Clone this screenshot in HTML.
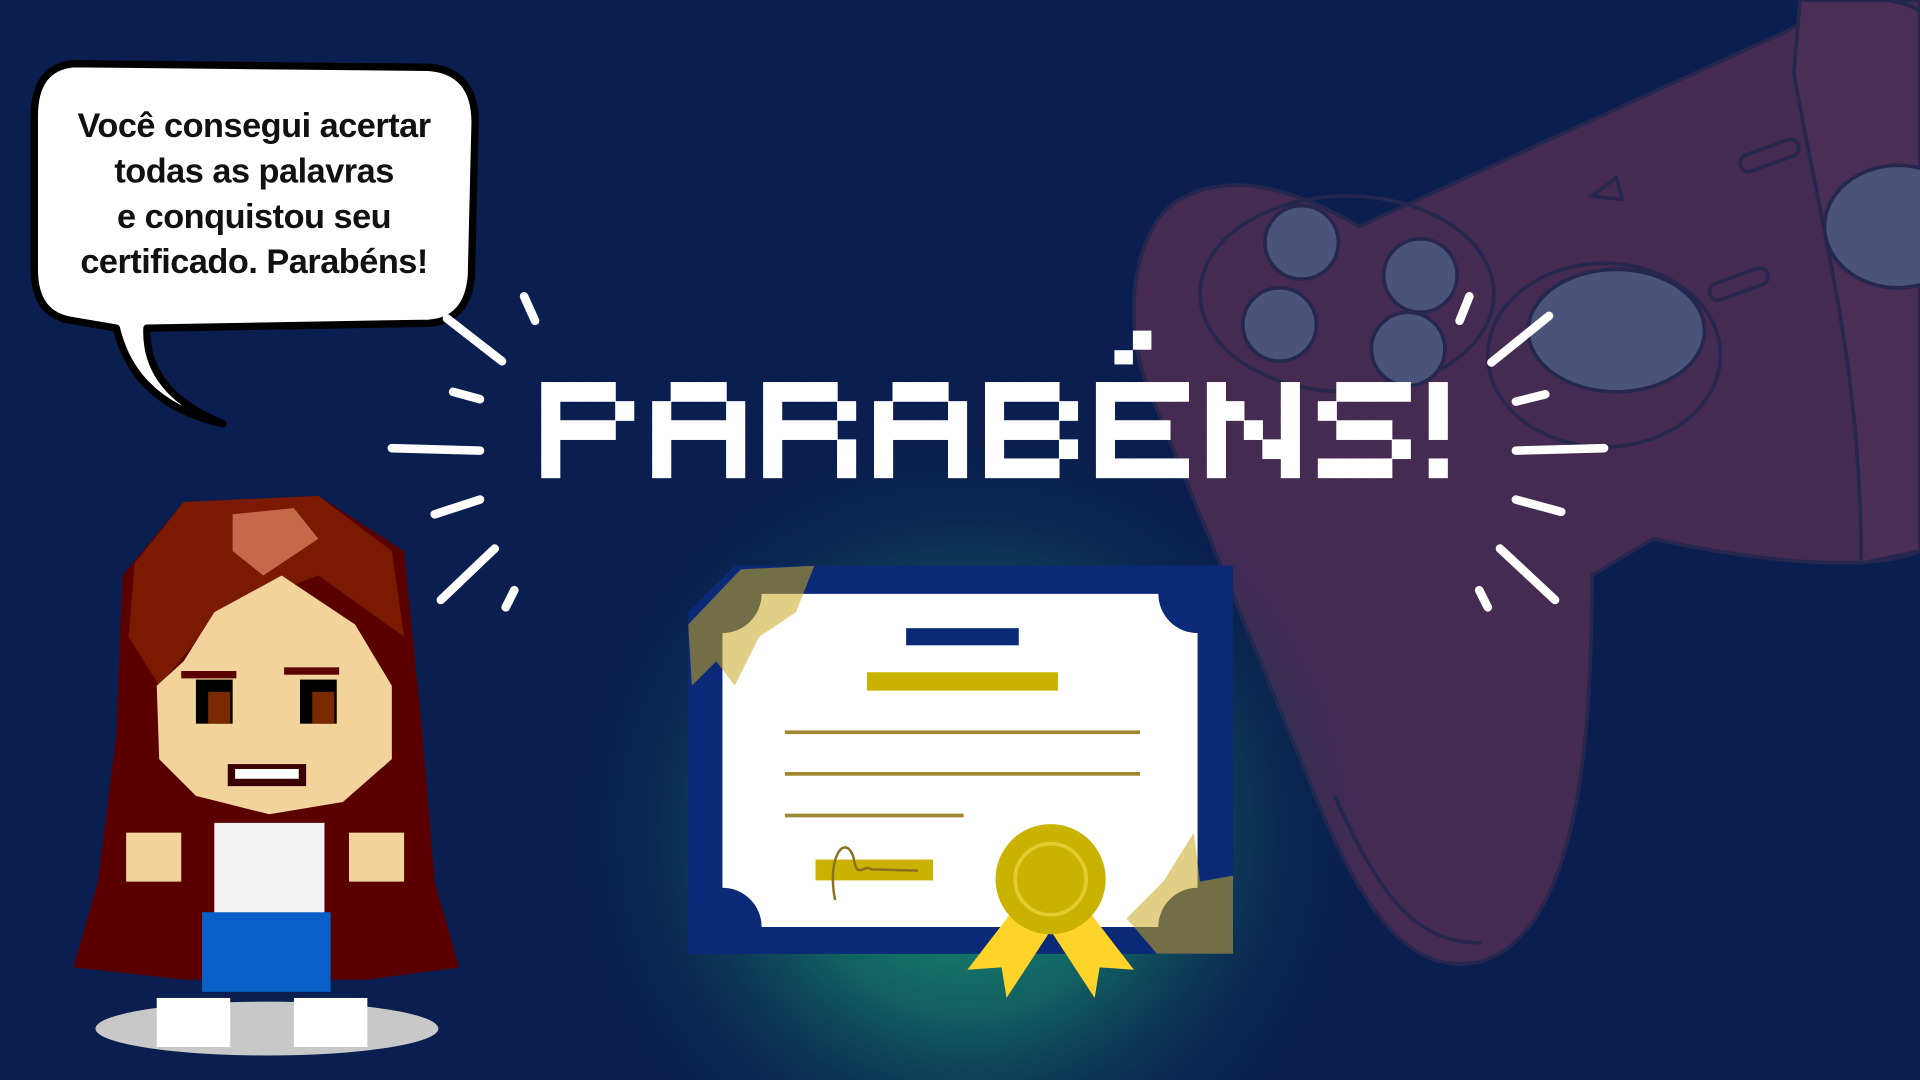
<!DOCTYPE html>
<html><head><meta charset="utf-8"><style>
html,body{margin:0;padding:0;width:1920px;height:1080px;overflow:hidden;background:#0a1f4f}
#w{position:absolute;left:0;top:0;width:1568px;height:882px;transform:scale(1.22449);transform-origin:0 0}
.t{position:absolute;left:25px;top:84px;width:365px;text-align:center;font-family:"Liberation Sans",sans-serif;font-weight:bold;font-size:28px;line-height:37px;color:#111;letter-spacing:-0.4px}
</style></head><body><div id="w">
<svg width="1568" height="882" viewBox="0 0 1568 882" style="position:absolute;left:0;top:0">
<defs>
<radialGradient id="g" cx="790" cy="680" r="330" gradientUnits="userSpaceOnUse">
<stop offset="0" stop-color="#1fa07e"/><stop offset="0.45" stop-color="#137066" stop-opacity="0.8"/><stop offset="1" stop-color="#0a1f4f" stop-opacity="0"/></radialGradient>
<clipPath id="cc"><path d="M562 500 L600 462 L1007 462 L1007 779 L562 779 Z"/></clipPath>
</defs>
<rect width="1568" height="882" fill="#0a1f4f"/>
<!-- controller -->
<g stroke="#26274f" stroke-width="3">
<path d="M960 165 C1000 140 1050 150 1110 185 L1460 25 C1500 0 1568 0 1568 0 L1568 450 C1520 470 1420 455 1350 440 L1300 470 C1300 600 1290 760 1210 785 C1150 800 1110 740 1070 640 C1020 520 980 420 935 310 C915 250 930 185 960 165 Z" fill="#452b52"/>
<path d="M1470 0 L1540 0 C1568 5 1568 10 1568 10 L1568 450 L1520 460 C1520 300 1490 200 1465 60 Z" fill="#4a2e56"/>
<ellipse cx="1100" cy="240" rx="120" ry="80" fill="none"/>
<circle cx="1063" cy="198" r="30" fill="#4a5478"/>
<circle cx="1160" cy="225" r="30" fill="#4a5478"/>
<circle cx="1045" cy="265" r="30" fill="#4a5478"/>
<circle cx="1150" cy="285" r="30" fill="#4a5478"/>
<ellipse cx="1310" cy="290" rx="95" ry="75" fill="none"/>
<ellipse cx="1320" cy="270" rx="72" ry="50" fill="#4a5478"/>
<ellipse cx="1550" cy="185" rx="60" ry="50" fill="#4a5478"/>
<path d="M1300 160 l20 -15 l5 18 z" fill="none"/>
<rect x="1420" y="120" width="50" height="14" rx="7" fill="none" transform="rotate(-20 1445 127)"/>
<rect x="1395" y="225" width="50" height="14" rx="7" fill="none" transform="rotate(-20 1420 232)"/>
<path d="M1090 650 C1130 740 1160 770 1210 770" fill="none"/>
</g>
<rect width="1568" height="882" fill="url(#g)"/>
<!-- speech bubble -->
<path d="M60 52 L350 55 Q388 58 388 100 L385 225 Q382 262 350 264 L120 268 Q118 320 182 346 Q110 330 95 268 L60 262 Q28 258 28 220 L28 95 Q28 55 60 52 Z" fill="#fff" stroke="#000" stroke-width="6" stroke-linejoin="round"/>
<!-- rays -->
<g stroke="#fff" stroke-width="7" stroke-linecap="round" fill="none">
<path d="M365 260 L410 295"/><path d="M428 242 L437 262"/><path d="M370 320 L392 326"/><path d="M320 366 L392 368"/>
<path d="M355 420 L392 408"/><path d="M360 490 L404 448"/><path d="M413 496 L420 482"/>
<path d="M1265 258 L1218 296"/><path d="M1200 242 L1192 262"/><path d="M1262 322 L1238 328"/><path d="M1310 366 L1238 368"/>
<path d="M1275 418 L1238 408"/><path d="M1270 490 L1225 448"/><path d="M1215 496 L1208 482"/>
</g>
<g fill="#fff" id="title"></g>
<!-- certificate -->
<path d="M562 500 L600 462 L1007 462 L1007 779 L562 779 Z" fill="#0a2a78"/>
<g clip-path="url(#cc)">
<path d="M590 485 L978 485 L978 757 L590 757 Z" fill="#fff"/>
<circle cx="978" cy="485" r="32" fill="#0a2a78"/><circle cx="590" cy="485" r="32" fill="#0a2a78"/>
<circle cx="978" cy="757" r="32" fill="#0a2a78"/><circle cx="590" cy="757" r="32" fill="#0a2a78"/>
<g fill="#c9a820" opacity="0.55"><path d="M605 465 L665 462 L650 500 L620 520 L600 560 L585 540 L565 560 L562 510 Z"/><path d="M975 680 L980 720 L1007 715 L1007 779 L945 779 L920 750 L950 720 Z"/></g>
</g>
<rect x="740" y="513" width="92" height="14" fill="#0a2a78"/>
<rect x="708" y="549" width="156" height="15" fill="#c9b300"/>
<g stroke="#a08830" stroke-width="3"><path d="M641 598H931M641 632H931M641 666H787"/></g>
<rect x="666" y="702" width="96" height="17" fill="#c9b300"/>
<path d="M682 735 C675 700 690 680 697 700 C700 720 705 705 712 710 L750 711" stroke="#8a7020" stroke-width="2" fill="none"/>
<path d="M830 740 L790 792 L818 790 L822 815 L858 760 Z" fill="#ffd42a"/>
<path d="M886 740 L926 792 L898 790 L894 815 L858 760 Z" fill="#ffd42a"/>
<circle cx="858" cy="718" r="45" fill="#c9b300"/>
<circle cx="858" cy="718" r="29" fill="none" stroke="#e2cc30" stroke-width="3"/>
<!-- girl -->
<g>
<ellipse cx="218" cy="840" rx="140" ry="22" fill="#c8c8c8"/>
<path d="M150 410 L260 405 L330 450 L345 600 L355 720 L375 790 L300 800 L150 800 L60 790 L80 720 L95 600 L100 470 Z" fill="#5a0000"/>
<path d="M150 410 L260 405 L320 450 L330 520 L260 470 L180 500 L130 560 L105 520 L110 460 Z" fill="#7a1a00"/>
<path d="M190 420 L240 415 L260 440 L215 470 L190 450 Z" fill="#c46a4a"/>
<path d="M150 540 L175 500 L230 470 L290 510 L320 560 L320 620 L280 655 L220 665 L160 650 L130 620 L128 560 Z" fill="#f2d39b"/>
<rect x="160" y="555" width="30" height="36" fill="#000"/><rect x="170" y="565" width="18" height="26" fill="#7a2a00"/>
<rect x="245" y="555" width="30" height="36" fill="#000"/><rect x="255" y="565" width="18" height="26" fill="#7a2a00"/>
<rect x="148" y="548" width="45" height="6" fill="#5a0000"/><rect x="232" y="545" width="45" height="6" fill="#5a0000"/>
<rect x="186" y="624" width="64" height="18" fill="#3a0000"/><rect x="192" y="628" width="52" height="8" fill="#fff"/>
<rect x="175" y="672" width="90" height="74" fill="#f2f2f2"/>
<rect x="103" y="680" width="45" height="40" fill="#f2d39b"/><rect x="285" y="680" width="45" height="40" fill="#f2d39b"/>
<rect x="165" y="745" width="105" height="65" fill="#0a60c8"/>
<rect x="128" y="815" width="60" height="40" fill="#fff"/><rect x="240" y="815" width="60" height="40" fill="#fff"/>
</g>
</svg>
<div class="t">Você consegui acertar<br>todas as palavras<br>e conquistou seu<br>certificado. Parabéns!</div>
</div>
<script>
var F={P:["11110","10001","11110","10000","10000"],A:["01110","10001","11111","10001","10001"],R:["11110","10001","11110","10001","10001"],B:["11110","10001","11110","10001","11110"],E:["11111","10000","11110","10000","11111"],N:["10001","11001","10101","10011","10001"],S:["01111","10000","01110","00001","11110"],"!":["1","1","1","0","1"]};
var s="PARABENS!",x=442,u=15.1,h=15.6,g=document.getElementById("title"),o="";
for(var c of s){var m=F[c];for(var r=0;r<5;r++)for(var k=0;k<m[r].length;k++)if(m[r][k]=="1")o+='<rect x="'+(x+k*u)+'" y="'+(312+r*h)+'" width="'+(u+0.5)+'" height="'+(h+0.5)+'"/>';
if(c=="E")o+='<rect x="'+(x+2*u)+'" y="270" width="'+u+'" height="'+h+'"/><rect x="'+(x+u)+'" y="286" width="'+u+'" height="'+(h-4)+'"/>';
x+=(m[0].length+1)*u;}
g.innerHTML=o;
</script>
</body></html>
